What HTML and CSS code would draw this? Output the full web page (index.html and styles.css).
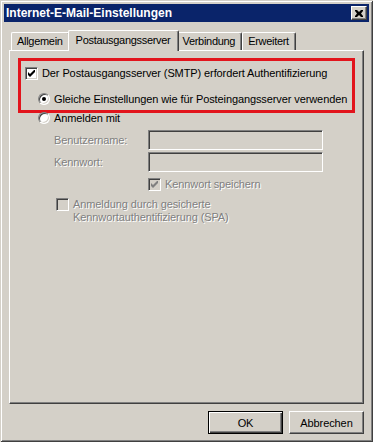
FILE: index.html
```html
<!DOCTYPE html>
<html lang="de">
<head>
    <meta charset="UTF-8">
    <title>Internet-E-Mail-Einstellungen</title>
    <link rel="stylesheet" href="styles.css">
</head>
<body>
    <div class="window">
        <div class="titlebar">
            <span class="title">Internet-E-Mail-Einstellungen</span>
            <span class="close-btn">
                <svg width="8" height="7" viewBox="0 0 8 7"><path d="M0 0h2l2 2 2-2h2v1L6 3.5 8 6v1H6L4 5 2 7H0V6l2-2.5L0 1z" fill="#000"/></svg>
            </span>
        </div>

        <div class="content">
            <div class="tabs">
                <div class="tab">Allgemein</div>
                <div class="tab active">Postausgangsserver</div>
                <div class="tab">Verbindung</div>
                <div class="tab">Erweitert</div>
            </div>

            <div class="panel">
                <div class="highlight">
                    <div class="row">
                        <span class="checkbox"><svg width="7" height="7" viewBox="0 0 7 7"><path d="M0 2v3l2 2 5-5V-1L2 4z" fill="#000"/></svg></span>
                        <span>Der Postausgangsserver (SMTP) erfordert Authentifizierung</span>
                    </div>
                    <div class="row row-radio">
                        <span class="radio selected"></span>
                        <span>Gleiche Einstellungen wie für Posteingangsserver verwenden</span>
                    </div>
                </div>

                <div class="row row-login">
                    <span class="radio"></span>
                    <span>Anmelden mit</span>
                </div>

                <div class="fields">
                    <div class="field">
                        <span class="field-label disabled">Benutzername:</span>
                        <span class="input"></span>
                    </div>
                    <div class="field">
                        <span class="field-label disabled">Kennwort:</span>
                        <span class="input"></span>
                    </div>
                </div>

                <div class="row row-save">
                    <span class="checkbox off"><svg width="7" height="7" viewBox="0 0 7 7"><path d="M0 2v3l2 2 5-5V-1L2 4z" fill="#808080"/></svg></span>
                    <span class="disabled">Kennwort speichern</span>
                </div>

                <div class="row row-spa">
                    <span class="checkbox off"></span>
                    <span class="disabled">Anmeldung durch gesicherte<br>Kennwortauthentifizierung (SPA)</span>
                </div>
            </div>

            <div class="buttons">
                <button class="btn default">OK</button>
                <button class="btn">Abbrechen</button>
            </div>
        </div>
    </div>
</body>
</html>
```

FILE: styles.css
```css
* {
    box-sizing: border-box;
}

body {
    margin: 0;
    background: #d4d0c8;
    font-family: 'Liberation Sans', Arial, sans-serif;
    font-size: 11px;
    letter-spacing: -0.1px;
    color: #000;
}

.window {
    width: 373px;
    height: 442px;
    padding: 4px;
    background: #d4d0c8;
    box-shadow: inset 1px 1px #d4d0c8, inset -1px -1px #404040,
                inset 2px 2px #fff, inset -2px -2px #808080;
}

.titlebar {
    height: 18px;
    background: #0a246a;
    display: flex;
    align-items: center;
    justify-content: space-between;
    padding: 0 2px 0 2px;
}

.title {
    color: #fff;
    font-weight: bold;
    font-size: 12px;
    letter-spacing: 0;
}

.close-btn {
    width: 16px;
    height: 14px;
    background: #d4d0c8;
    border: 1px solid;
    border-color: #fff #404040 #404040 #fff;
    box-shadow: inset -1px -1px #808080;
    display: flex;
    align-items: center;
    justify-content: center;
}

.content {
    padding: 0 1px 0 1px;
}

.tabs {
    display: flex;
    align-items: flex-end;
    margin: 7px 0 -1px 6px;
    height: 22px;
    position: relative;
    z-index: 1;
    letter-spacing: -0.3px;
}

.tab {
    height: 18px;
    margin-bottom: 1px;
    padding: 0 6px 0 5px;
    line-height: 17px;
    background: #d4d0c8;
    border-top: 1px solid #fff;
    border-left: 1px solid #fff;
    border-right: 1px solid #404040;
    box-shadow: inset -1px 0 #808080;
    border-radius: 2px 2px 0 0;
}

.tab.active {
    height: 21px;
    margin: 0 -2px;
    padding: 0 7px;
    line-height: 18px;
    position: relative;
    z-index: 2;
}

.panel {
    height: 354px;
    margin: 0 4px 0 4px;
    padding: 7px 8px 0 8px;
    border: 1px solid;
    border-color: #fff #404040 #404040 #fff;
    box-shadow: inset -1px -1px #808080;
}

.highlight {
    border: 3px solid #e2141c;
    padding: 6px 4px 4px 4px;
}

.row {
    display: flex;
    align-items: flex-start;
    gap: 4px;
    line-height: 13px;
    white-space: nowrap;
}

.row-radio {
    margin: 13px 0 0 13px;
}

.row-login {
    margin: -1px 0 0 20px;
}

.row-save {
    margin: 6px 0 0 130px;
}

.row-spa {
    margin: 7px 0 0 38px;
}

.checkbox {
    width: 13px;
    height: 13px;
    flex: none;
    background: #fff;
    border: 1px solid;
    border-color: #808080 #fff #fff #808080;
    box-shadow: inset 1px 1px #404040, inset -1px -1px #d4d0c8;
    display: flex;
    align-items: center;
    justify-content: center;
}

.checkbox.off {
    background: #d4d0c8;
}

.radio {
    width: 12px;
    height: 12px;
    flex: none;
    border-radius: 50%;
    background: #fff;
    border: 1px solid;
    border-color: #808080 #fff #fff #808080;
    box-shadow: inset 1px 1px #404040, inset -1px -1px #d4d0c8;
    display: flex;
    align-items: center;
    justify-content: center;
}

.radio.selected::after {
    content: "";
    width: 4px;
    height: 4px;
    border-radius: 50%;
    background: #000;
}

.fields {
    margin: 5px 0 0 36px;
    display: flex;
    flex-direction: column;
    gap: 2px;
}

.field {
    display: flex;
    align-items: center;
}

.field-label {
    width: 94px;
}

.input {
    width: 175px;
    height: 20px;
    background: #d4d0c8;
    border: 1px solid;
    border-color: #808080 #fff #fff #808080;
    box-shadow: inset 1px 1px #404040, inset -1px -1px #d4d0c8;
}

.disabled {
    color: #808080;
    text-shadow: 1px 1px #fff;
}

.buttons {
    display: flex;
    justify-content: flex-end;
    gap: 6px;
    margin: 7px 4px 0 0;
}

.btn {
    width: 75px;
    height: 23px;
    padding: 0;
    font-family: inherit;
    font-size: 11px;
    letter-spacing: -0.1px;
    color: #000;
    background: #d4d0c8;
    border: 1px solid;
    border-color: #fff #404040 #404040 #fff;
    box-shadow: inset -1px -1px #808080;
}

.btn.default {
    border: 1px solid #000;
    box-shadow: inset 1px 1px #fff, inset -1px -1px #404040, inset -2px -2px #808080;
}
```
